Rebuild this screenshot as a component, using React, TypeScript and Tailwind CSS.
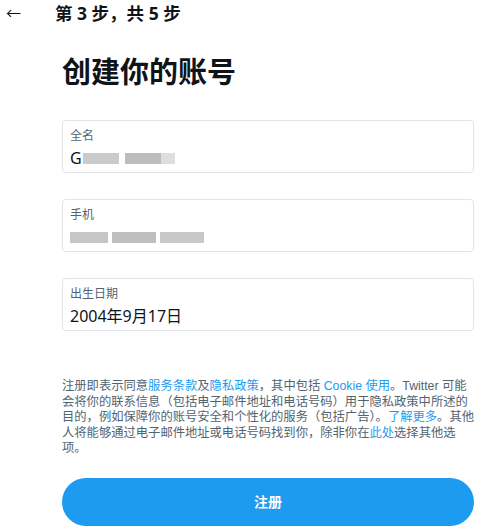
import React from 'react';

function Blur({ className }: { className: string }) {
  return <span className={`inline-block ${className}`} />;
}

function Field({ label, children }: { label: string; children: React.ReactNode }) {
  return (
    <div className="h-[53px] rounded-[4px] border border-[#e1e4e8] px-[7px] pt-[7px]">
      <div className="text-[12px] leading-[16px] text-[#536471]">{label}</div>
      <div className="mt-[4px] flex h-[20px] items-center text-[16px] text-[#0f1419]">{children}</div>
    </div>
  );
}

function App() {
  return (
    <div
      className="h-[532px] w-[498px] bg-white"
      style={{ fontFamily: '"Noto Sans", "Noto Sans CJK SC", sans-serif' }}
    >
      <div className="flex h-[26px] items-center">
        <span className="w-[55px] pl-[6px] text-[15px] text-[#0f1419]">←</span>
        <span className="text-[17.5px] font-bold text-[#0f1419]">第 3 步，共 5 步</span>
      </div>

      <div className="pl-[62px] pr-[24px]">
        <h1 className="mt-[27px] text-[29px] font-bold leading-[38px] text-[#0f1419]">创建你的账号</h1>

        <div className="mt-[29px] flex flex-col gap-[26px]">
          <Field label="全名">
            <span>G</span>
            <Blur className="ml-[1px] h-[11px] w-[36px] bg-[#cbcbcb]" />
            <Blur className="ml-[6px] h-[11px] w-[36px] bg-[#bdbdbd]" />
            <Blur className="h-[11px] w-[14px] bg-[#dedede]" />
          </Field>
          <Field label="手机">
            <Blur className="h-[11px] w-[38px] bg-[#c6c6c6]" />
            <Blur className="ml-[4px] h-[11px] w-[44px] bg-[#bfbfbf]" />
            <Blur className="ml-[4px] h-[11px] w-[44px] bg-[#c8c8c8]" />
          </Field>
          <Field label="出生日期">
            <span>2004年9月17日</span>
          </Field>
        </div>

        <p
          className="mt-[48px] text-[12.3px] leading-[15.5px] text-[#536471]"
          style={{ fontFamily: '"Liberation Sans", "Noto Sans CJK SC", sans-serif' }}
        >
          注册即表示同意<span className="text-[#1d9bf0]">服务条款</span>及<span className="text-[#1d9bf0]">隐私政策</span>，其中包括{' '}
          <span className="text-[#1d9bf0]">Cookie 使用</span>。Twitter 可能会将你的联系信息（包括电子邮件地址和电话号码）用于隐私政策中所述的目的，例如保障你的账号安全和个性化的服务（包括广告）。<span className="text-[#1d9bf0]">了解更多</span>。其他人将能够通过电子邮件地址或电话号码找到你，除非你在<span className="text-[#1d9bf0]">此处</span>选择其他选项。
        </p>

        <button className="mt-[21px] h-[48px] w-full rounded-full bg-[#1d9bf0] text-[14px] font-bold text-white">
          注册
        </button>
      </div>
    </div>
  );
}

export default App;
